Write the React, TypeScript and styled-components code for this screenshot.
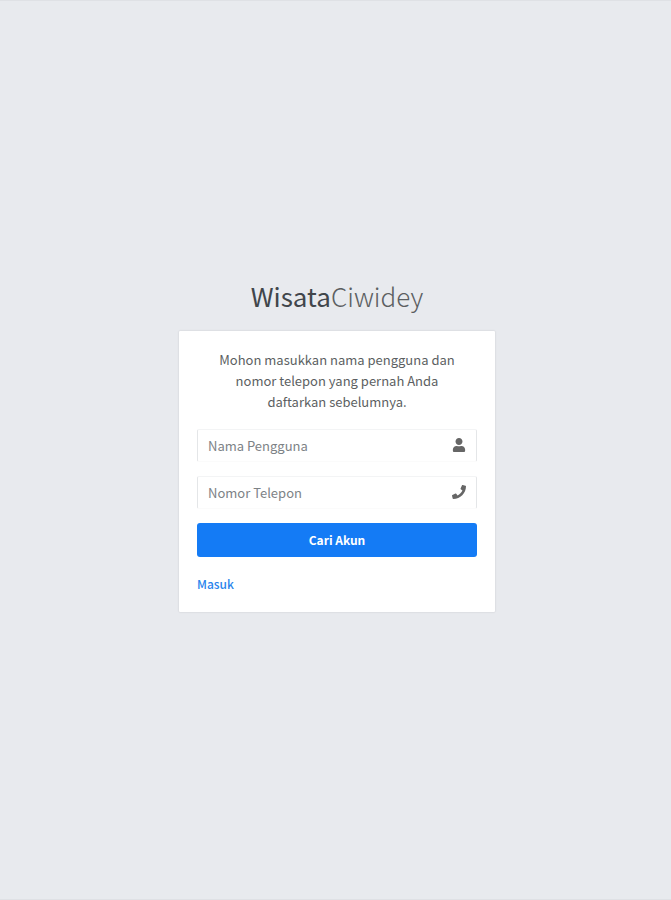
import React from "react";
import styled, { createGlobalStyle } from "styled-components";
import { FaUser, FaPhone } from "react-icons/fa";

const GlobalStyle = createGlobalStyle`
  *, *::before, *::after { box-sizing: border-box; }
  body {
    margin: 0;
    background: #e8eaee;
    color: #5c5f62;
    font-family: "Noto Sans CJK SC", "Noto Sans", sans-serif;
    font-size: 13px;
  }
`;

const Page = styled.main`
  display: flex;
  flex-direction: column;
  align-items: center;
  justify-content: center;
  min-height: 100vh;
  padding: 16px 16px 28px 19px;
  border-top: 1px solid #dfe1e5;
  border-bottom: 1px solid #dfe1e5;
`;

const Logo = styled.h1`
  margin: 0 0 16px;
  font-size: 26px;
  line-height: 38px;
  font-weight: 300;
  text-align: center;

  b { font-weight: 400; color: #41464b; }
`;

const Card = styled.section`
  width: 100%;
  max-width: 316px;
  padding: 18px;
  background: #fff;
  border-radius: 1px;
  box-shadow: 0 0 2px rgba(0, 0, 0, 0.16);
`;

const Message = styled.p`
  margin: 0 0 17px;
  padding: 0 18px;
  line-height: 21px;
  text-align: center;
`;

const Form = styled.form`
  display: grid;
  gap: 14px;
`;

const Field = styled.label`
  display: flex;
  align-items: center;
  height: 33px;
  padding: 0 10px;
  border: 1px solid #e4e6e8;
  border-top-color: #f3f4f5;
  border-bottom-color: #fbfbfb;
  border-radius: 2px;
  color: #666;

  svg { width: 14px; height: 14px; }
`;

const Input = styled.input`
  flex: 1;
  min-width: 0;
  padding: 0;
  border: 0;
  outline: 0;
  background: transparent;
  font: inherit;
  color: #495057;

  &::placeholder { color: #7d8286; opacity: 1; }
`;

const Button = styled.button`
  height: 34px;
  padding: 0;
  border: 0;
  border-radius: 3px;
  background: #147bf5;
  color: #fff;
  font-family: inherit;
  font-size: 12px;
  font-weight: 700;
`;

const Link = styled.a`
  display: inline-block;
  margin-top: 16px;
  font-size: 12px;
  line-height: 21px;
  font-weight: 500;
  color: #2a84ec;
  text-decoration: none;
`;

export default function App() {
  return (
    <>
      <GlobalStyle />
      <Page>
        <Logo><b>Wisata</b>Ciwidey</Logo>
        <Card>
          <Message>Mohon masukkan nama pengguna dan nomor telepon yang pernah Anda daftarkan sebelumnya.</Message>
          <Form>
            <Field>
              <Input type="text" placeholder="Nama Pengguna" aria-label="Nama Pengguna" />
              <FaUser />
            </Field>
            <Field>
              <Input type="tel" placeholder="Nomor Telepon" aria-label="Nomor Telepon" />
              <FaPhone />
            </Field>
            <Button type="button">Cari Akun</Button>
          </Form>
          <Link href="#masuk">Masuk</Link>
        </Card>
      </Page>
    </>
  );
}
